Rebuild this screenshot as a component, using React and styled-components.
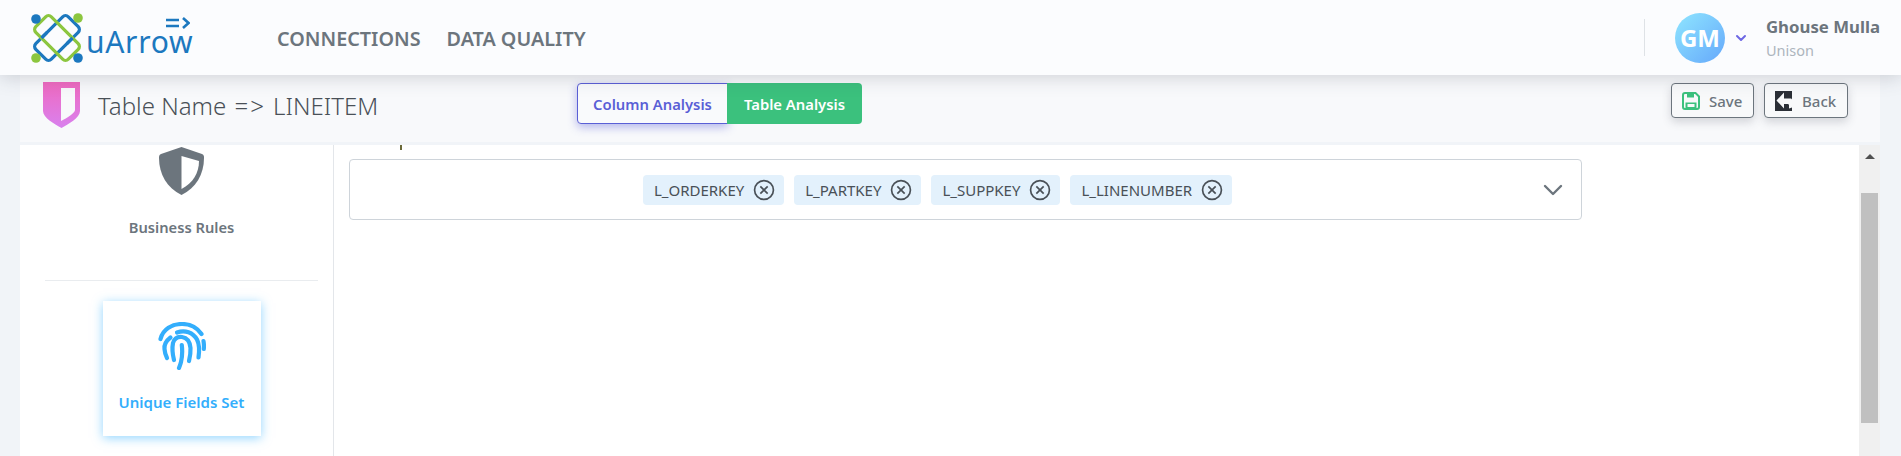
import React from 'react'
import styled, { createGlobalStyle } from 'styled-components'
import { ChevronDown } from 'lucide-react'

const GlobalStyle = createGlobalStyle`
  html, body {
    margin: 0;
    padding: 0;
    background: #f1f4f8;
    font-family: "Noto Sans", "Open Sans", sans-serif;
  }
  * { box-sizing: border-box; }
`

const Page = styled.div`
  height: 456px;
  overflow: hidden;
`

const Header = styled.header`
  position: relative;
  z-index: 2;
  height: 75px;
  display: flex;
  align-items: center;
  padding: 0 21px 0 31px;
  background: #fbfcfe;
  box-shadow: 0 2px 18px rgba(60, 64, 80, 0.22);
`

const Logo = styled.div`
  display: flex;
  align-items: center;
  width: 246px;
  margin-top: 1px;
`

const WordMark = styled.span`
  position: relative;
  margin-left: 3px;
  font-size: 30px;
  line-height: 40px;
  margin-top: 8px;
  letter-spacing: 0.7px;
  color: #1c78bf;

  > svg {
    position: absolute;
    top: -5px;
    right: 3px;
  }
`

const Nav = styled.nav`
  display: flex;
  gap: 26px;
  margin-top: 2px;
`

const NavLink = styled.a`
  font-size: 19.8px;
  font-weight: 600;
  color: #6c757d;
`

const UserArea = styled.div`
  margin-left: auto;
  display: flex;
  align-items: center;
  height: 37px;
  padding-left: 30px;
  border-left: 1px solid #dee2e6;
`

const Avatar = styled.div`
  width: 50px;
  height: 50px;
  border-radius: 50%;
  display: flex;
  align-items: center;
  justify-content: center;
  background: linear-gradient(135deg, #8fe6ff, #65a8fb);
  color: #fff;
  font-size: 24px;
  font-weight: 700;
`

const Caret = styled(ChevronDown)`
  margin: 0 17px 0 8px;
  color: #6d67e4;
`

const UserText = styled.div`
  display: flex;
  flex-direction: column;
  gap: 3px;
`

const UserName = styled.span`
  font-size: 16.8px;
  line-height: 22px;
  font-weight: 700;
  color: #6c757d;
`

const UserOrg = styled.span`
  font-size: 14.5px;
  line-height: 19px;
  color: #adb5bd;
`

const Panel = styled.main`
  width: 1860px;
  margin-left: 20px;
`

const SubBar = styled.div`
  height: 70px;
  display: flex;
  align-items: flex-start;
  padding: 7px 32px 0 23px;
  background: #f8f9fb;
  border-bottom: 3px solid #f1f4f8;
`

const TableTitle = styled.h1`
  margin: 8px 0 0 18px;
  width: 479px;
  font-size: 24px;
  line-height: 32px;
  font-weight: 300;
  color: #495057;

  > span {
    margin: 0 1px 0 2px;
    letter-spacing: 2px;
  }
`

const Toggle = styled.div`
  display: flex;
  margin-top: 1px;
`

const ToggleButton = styled.button`
  height: 41px;
  font-family: inherit;
  font-size: 14.8px;
  font-weight: 600;
  cursor: pointer;
  padding: 0;
  width: ${(p) => (p.$active ? '135px' : '151px')};
  margin-left: ${(p) => (p.$active ? '-1px' : '0')};
  color: ${(p) => (p.$active ? '#fff' : '#5a5fd6')};
  background: ${(p) => (p.$active ? '#3bc17d' : '#f9fafc')};
  border: ${(p) => (p.$active ? 'none' : '1px solid #5a5fd6')};
  border-radius: ${(p) => (p.$active ? '0 4px 4px 0' : '4px 0 0 4px')};
  box-shadow: ${(p) => (p.$active ? 'none' : '0 3px 10px rgba(90, 95, 214, 0.45)')};
`

const Actions = styled.div`
  margin-left: auto;
  display: flex;
  gap: 10px;
  margin-top: 1px;
`

const ActionButton = styled.button`
  height: 35px;
  width: ${(p) => p.$width}px;
  display: flex;
  align-items: center;
  gap: ${(p) => p.$gap}px;
  padding: 0 0 0 10px;
  font-family: inherit;
  font-size: 15px;
  font-weight: 500;
  color: #6c757d;
  background: #f8f9fa;
  border: 1px solid #6c757d;
  border-radius: 4px;
  box-shadow: 0 4px 10px rgba(60, 64, 80, 0.2);
`

const Body = styled.div`
  height: 311px;
  display: flex;
  background: #fff;
`

const SideColumn = styled.aside`
  width: 314px;
  flex-shrink: 0;
  display: flex;
  flex-direction: column;
  align-items: center;
  padding: 2px 0 0 10px;
  border-right: 1px solid #e3e6ea;
`

const RuleLabel = styled.div`
  margin-top: 22px;
  font-size: ${(p) => p.$size}px;
  line-height: 20px;
  font-weight: 600;
  color: ${(p) => p.$color};
`

const Divider = styled.hr`
  width: 273px;
  margin: 43px 0 20px;
  border: 0;
  border-top: 1px solid #e9ecef;
`

const RuleCard = styled.div`
  width: 158px;
  height: 135px;
  display: flex;
  flex-direction: column;
  align-items: center;
  padding-top: 21px;
  background: #fff;
  box-shadow: 0 2px 10px rgba(56, 178, 255, 0.55);
`

const MainColumn = styled.section`
  flex: 1;
  padding-left: 15px;
`

const Tick = styled.div`
  width: 2px;
  height: 5px;
  margin-left: 51px;
  background: #6b6a3a;
`

const MultiSelect = styled.div`
  width: 1233px;
  height: 61px;
  margin-top: 9px;
  display: flex;
  align-items: center;
  border: 1px solid #ced4da;
  border-radius: 4px;
`

const ChipList = styled.div`
  flex: 1;
  display: flex;
  justify-content: center;
  gap: 10px;
`

const Chip = styled.span`
  height: 30px;
  display: flex;
  align-items: center;
  gap: 9px;
  padding: 0 9px 0 11px;
  font-size: 15px;
  color: #495057;
  background: #e3f1fc;
  border-radius: 4px;
`

const ChipClear = styled.svg`
  width: 22px;
  height: 22px;
`

const SelectCaret = styled(ChevronDown)`
  width: 56px;
  color: #6c757d;
`

const ScrollTrack = styled.div`
  width: 21px;
  flex-shrink: 0;
  padding: 0 2px;
  background: #f0f0f0;
`

const ScrollArrow = styled.div`
  width: 0;
  height: 0;
  margin: 9px auto 34px;
  border-left: 5px solid transparent;
  border-right: 5px solid transparent;
  border-bottom: 5px solid #505050;
`

const ScrollThumb = styled.div`
  height: 230px;
  background: #c0c0c0;
`

const chips = ['L_ORDERKEY', 'L_PARTKEY', 'L_SUPPKEY', 'L_LINENUMBER']

function LogoMark() {
  return (
    <svg width="52" height="50" viewBox="0 0 52 50" fill="none">
      <g transform="rotate(45 26 25)">
        <rect x="15" y="2" width="22" height="46" rx="4" stroke="#1c78bf" strokeWidth="3.2" />
        <rect x="3" y="14" width="46" height="22" rx="4" stroke="#8cc63f" strokeWidth="3.2" />
        <path d="M37 14v8M15 28v8" stroke="#1c78bf" strokeWidth="3.2" />
      </g>
      <circle cx="5" cy="6" r="4.8" fill="#1c78bf" />
      <circle cx="47" cy="5" r="4.8" fill="#8cc63f" />
      <circle cx="5" cy="45" r="4.8" fill="#8cc63f" />
      <circle cx="47" cy="45" r="4.8" fill="#1c78bf" />
    </svg>
  )
}

function PinkShield() {
  return (
    <svg width="37" height="46" viewBox="0 0 37 46">
      <defs>
        <linearGradient id="pink" x1="0" y1="0" x2="0" y2="1">
          <stop offset="0" stopColor="#ef69bf" />
          <stop offset="1" stopColor="#d981ee" />
        </linearGradient>
      </defs>
      <path d="M0 0h37v29c0 7-12 13-18.500 17C12 42 0 36 0 29z" fill="url(#pink)" />
      <path d="M18 6h14v22c0 3-8 8-14 11z" fill="#f8f9fb" />
    </svg>
  )
}

function GreyShield() {
  return (
    <svg width="45" height="48" viewBox="0 0 45 48">
      <path
        d="M22.500 0 43 7c2 1 2 2 2 4 0 16-8 30-22.500 37C8 41 0 27 0 11c0-2 0-3 2-4z"
        fill="#6c757d"
      />
      <path d="M22.500 9 40 14c0 12-6 22-17.500 28z" fill="#fff" />
    </svg>
  )
}

function SaveIcon() {
  return (
    <svg width="18" height="18" viewBox="0 0 18 18" fill="none">
      <path d="M1 3c0-1 1-2 2-2h10.500L17 4.500V15c0 1-1 2-2 2H3c-1 0-2-1-2-2z" stroke="#3bc17d" strokeWidth="2" />
      <path d="M5 1.500h7v4H5z" fill="#3bc17d" />
      <path d="M3.500 10.500h11V16h-11z" fill="#3bc17d" />
      <path d="M5.500 12h7v3h-7z" fill="#f8f9fa" />
    </svg>
  )
}

function FingerprintIcon() {
  return (
    <svg width="48" height="48" viewBox="0 0 48 48" fill="none" stroke="#33aefc" strokeWidth="4.200" strokeLinecap="round">
      <path d="M2.500 17C5 7 14 2 24 2c8 0 15 3.500 19.500 10" />
      <path d="M12.500 15.500C8 19 6 23 6.500 27c.2 3 1 6 2.500 9" />
      <path d="M19 10.500c8-3 16 0 20 7 2.500 5 2.500 11 1.500 18" />
      <path d="M45.500 19c.5 3 .6 5 .3 8" />
      <path d="M16 38c-1.500-6-2-12-1-17 1.500-5 5-6.500 9-6 5 .7 8 5 8.500 11 .2 4-.5 9-1.500 13" />
      <path d="M23.800 23c.7 6 .4 12-.8 17-.5 2-1.200 4-2 6" />
    </svg>
  )
}

function BackIcon() {
  return (
    <svg width="17" height="20" viewBox="0 0 17 20">
      <rect width="17" height="20" fill="#2b2f36" />
      <path d="M9 1.500 1.500 9.500 9 17.500v-4.500h3.500c1 0 1.500.5 1.500 1.500v3l3-1V9c0-1-.5-1.500-1.500-1.500H9z" fill="#f8f9fa" />
    </svg>
  )
}

function App() {
  return (
    <Page>
      <GlobalStyle />
      <Header>
        <Logo>
          <LogoMark />
          <WordMark>
            uArrow
            <svg width="24" height="12" viewBox="0 0 24 12" fill="none" stroke="#1c78bf" strokeWidth="2.600">
              <path d="M0 3h13M0 9h13M17 1l5.500 5-5.500 5" />
            </svg>
          </WordMark>
        </Logo>
        <Nav>
          <NavLink>CONNECTIONS</NavLink>
          <NavLink>DATA QUALITY</NavLink>
        </Nav>
        <UserArea>
          <Avatar>GM</Avatar>
          <Caret size={16} strokeWidth={3} />
          <UserText>
            <UserName>Ghouse Mulla</UserName>
            <UserOrg>Unison</UserOrg>
          </UserText>
        </UserArea>
      </Header>
      <Panel>
        <SubBar>
          <PinkShield />
          <TableTitle>Table Name <span>=&gt;</span> LINEITEM</TableTitle>
          <Toggle>
            <ToggleButton>Column Analysis</ToggleButton>
            <ToggleButton $active>Table Analysis</ToggleButton>
          </Toggle>
          <Actions>
            <ActionButton $width={83} $gap={9}>
              <SaveIcon />
              Save
            </ActionButton>
            <ActionButton $width={84} $gap={10}>
              <BackIcon />
              Back
            </ActionButton>
          </Actions>
        </SubBar>
        <Body>
          <SideColumn>
            <GreyShield />
            <RuleLabel $color="#6c757d" $size={14.7}>Business Rules</RuleLabel>
            <Divider />
            <RuleCard>
              <FingerprintIcon />
              <RuleLabel $color="#33aefc" $size={15}>Unique Fields Set</RuleLabel>
            </RuleCard>
          </SideColumn>
          <MainColumn>
            <Tick />
            <MultiSelect>
              <ChipList>
                {chips.map((chip) => (
                  <Chip key={chip}>
                    {chip}
                    <ChipClear viewBox="0 0 21 21" fill="none" stroke="#495057" strokeWidth="1.600">
                      <circle cx="10.500" cy="10.500" r="9" />
                      <path d="M7 7l7 7M14 7l-7 7" />
                    </ChipClear>
                  </Chip>
                ))}
              </ChipList>
              <SelectCaret size={32} strokeWidth={1.8} />
            </MultiSelect>
          </MainColumn>
          <ScrollTrack>
            <ScrollArrow />
            <ScrollThumb />
          </ScrollTrack>
        </Body>
      </Panel>
    </Page>
  )
}

export default App
